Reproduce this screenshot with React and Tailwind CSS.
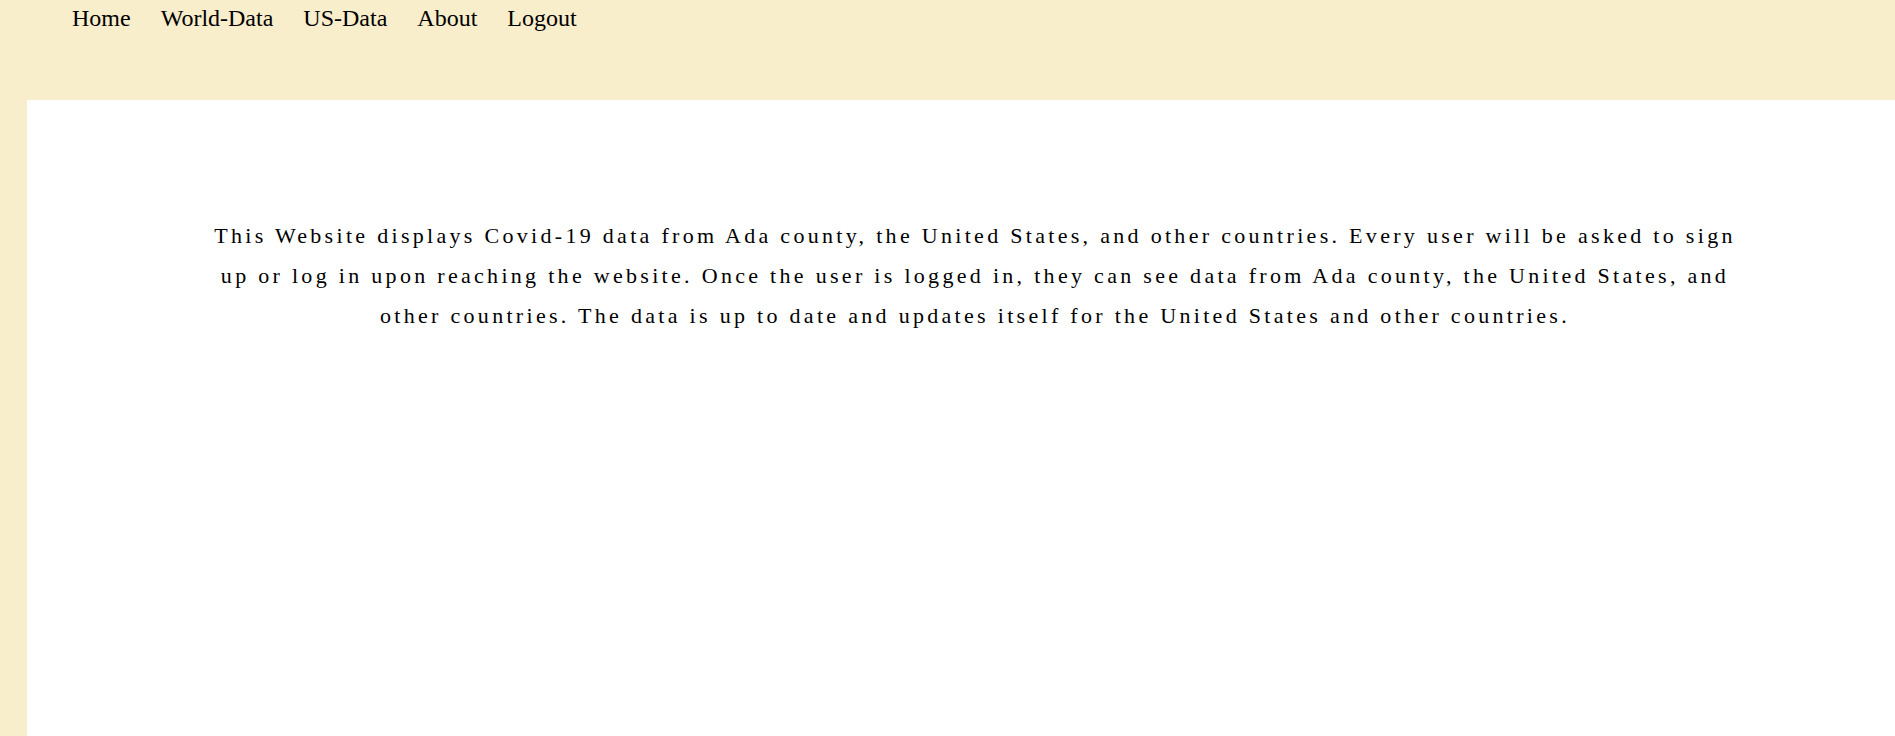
const navLinks = ["Home", "World-Data", "US-Data", "About", "Logout"];

const App = () => {
    return (
        <div className="min-h-screen flex flex-col bg-[#f9eecc] font-['Liberation_Serif',serif] text-black">
            <nav className="h-[100px] shrink-0 pl-[72px] pt-[5px]">
                <ul className="flex items-start gap-[30px] text-[24px] leading-[normal]">
                    {navLinks.map((name) => (
                        <li key={name}>
                            <a href="#" className="text-black">{name}</a>
                        </li>
                    ))}
                </ul>
            </nav>
            <main className="flex-1 ml-[27px] bg-white pt-[116px]">
                <p className="ml-[180px] w-[1536px] text-center text-[22px] leading-[40px] tracking-[3.3px]">
                    This Website displays Covid-19 data from Ada county, the United States, and other countries. Every user will be asked to sign up or log in upon reaching the website. Once the user is logged in, they can see data from Ada county, the United States, and other countries. The data is up to date and updates itself for the United States and other countries.
                </p>
            </main>
        </div>
    );
};

export default App;
